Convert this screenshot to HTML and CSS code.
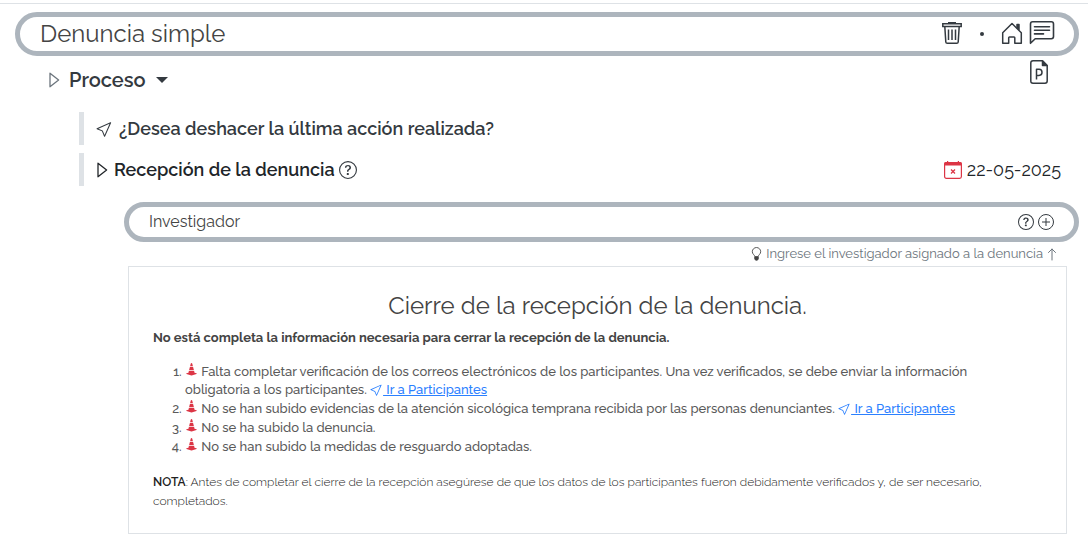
FILE: index.html
```html
<!DOCTYPE html>
<html lang="es">
<head>
<meta charset="utf-8">
<meta name="viewport" content="width=device-width, initial-scale=1">
<title>Denuncia simple</title>
<link rel="stylesheet" href="styles.css">
</head>
<body>
<svg class="defs" aria-hidden="true">
  <symbol id="cursor" viewBox="0 0 16 16"><path d="M14.082 2.182a.5.5 0 0 1 .103.557L8.528 15.467a.5.5 0 0 1-.917-.007L5.57 10.694.803 8.652a.5.5 0 0 1-.006-.916l12.728-5.657a.5.5 0 0 1 .556.103zM2.25 8.184l3.897 1.67a.5.5 0 0 1 .262.263l1.67 3.897L12.743 3.52z"/></symbol>
  <symbol id="cone" viewBox="0 0 16 16"><path d="m9.97 4.88.953 3.811C10.159 8.878 9.14 9 8 9s-2.158-.122-2.923-.309L6.03 4.88C6.635 4.957 7.3 5 8 5s1.365-.043 1.97-.12m-.245-.978L8.97.88C8.718-.13 7.282-.13 7.03.88L6.275 3.9C6.8 3.965 7.382 4 8 4s1.2-.036 1.725-.098m4.396 8.613a.5.5 0 0 1 .037.96l-6 2a.5.5 0 0 1-.316 0l-6-2a.5.5 0 0 1 .037-.96l2.391-.598.565-2.257c.862.212 1.964.339 3.165.339s2.303-.127 3.165-.339l.565 2.257z"/></symbol>
  <symbol id="question" viewBox="0 0 16 16"><path d="M8 15A7 7 0 1 1 8 1a7 7 0 0 1 0 14m0 1A8 8 0 1 0 8 0a8 8 0 0 0 0 16"/><path d="M5.255 5.786a.237.237 0 0 0 .241.247h.825c.138 0 .248-.113.266-.25.09-.656.54-1.134 1.342-1.134.686 0 1.314.343 1.314 1.168 0 .635-.374.927-.965 1.371-.673.489-1.206 1.06-1.168 1.987l.003.217a.25.25 0 0 0 .25.246h.811a.25.25 0 0 0 .25-.25v-.105c0-.718.273-.927 1.01-1.486.609-.463 1.244-.977 1.244-2.056 0-1.511-1.276-2.241-2.673-2.241-1.267 0-2.655.59-2.75 2.286m1.557 5.763c0 .533.425.927 1.01.927.609 0 1.028-.394 1.028-.927 0-.552-.42-.94-1.029-.94-.584 0-1.009.388-1.009.94"/></symbol>
  <symbol id="triangle" viewBox="0 0 12 16"><path d="M2 1.200v13.600L10.600 8z" fill="none" stroke="currentColor" stroke-width="1.300" stroke-linejoin="round"/></symbol>
</svg>

<div class="rule"></div>
<main class="page">
  <header class="pill pill-title">
    <h1 class="title">Denuncia simple</h1>
    <div class="tools">
      <button class="icon-btn" aria-label="Eliminar"><svg class="icon-lg" viewBox="0 0 24 24" fill="none" stroke="currentColor" stroke-width="1.5"><path d="M2.800 1.800h18.400v2.700H2.800zM4.800 4.500l1 15.500q.1 1.300 1.500 1.300h9.400q1.400 0 1.500-1.300L19.200 4.500M8.500 7.500v10.500M12 7.500v10.500M15.500 7.500v10.500"/><path d="M9 1V.500h6V1" stroke-width="2"/></svg></button>
      <span class="dot"></span>
      <a class="icon-btn" href="#inicio" aria-label="Inicio"><svg class="icon-lg" viewBox="0 0 24 24" fill="none" stroke="currentColor" stroke-width="1.5" stroke-linejoin="round"><path d="M2.700 10.800V21.300h6v-5.500q0-.8.8-.8h4.500q.8 0 .8.8v5.500h6.500V10.800L12 1.500z"/><path d="M17 2.500h2v5l-2-2z" fill="currentColor"/></svg></a>
      <button class="icon-btn" aria-label="Comentarios"><svg class="icon-xl" viewBox="0 1 26 24" fill="none" stroke="currentColor" stroke-width="1.600" stroke-linecap="round" stroke-linejoin="round"><path d="M1.500 22.300V3q0-2.200 2.200-2.200h18.600q2.200 0 2.200 2.200v12.500q0 2.200-2.200 2.200H6.200z"/><path d="M5.500 5.700h15M5.500 9.300h15M5.500 12.900h9"/></svg></button>
    </div>
  </header>

  <div class="process">
    <button class="process-toggle"><svg class="tri thin"><use href="#triangle"/></svg><span>Proceso</span><span class="caret"></span></button>
    <button class="icon-btn doc" aria-label="Documento P"><svg class="icon-doc" viewBox="0 0 18 24" fill="none" stroke="currentColor" stroke-width="1.500" stroke-linejoin="round"><path d="M3 .8h9.500L17.200 5.500v15.500q0 2.200-2.200 2.200H3Q.8 23.200.8 21V3Q.8.8 3 .8z"/><path d="M12.500 1v4.500h4.500z" fill="currentColor"/><path d="M6.500 19.500V9.200h2.500q3 0 3 3.100t-3 3.100H6.500"/></svg></button>
  </div>

  <section class="steps">
    <div class="step">
      <a class="step-name undo" href="#deshacer"><svg class="icon-md"><use href="#cursor"/></svg><span>¿Desea deshacer la última acción realizada?</span></a>
    </div>
    <div class="step">
      <button class="step-name"><svg class="tri"><use href="#triangle"/></svg><span>Recepción de la denuncia</span></button>
      <button class="icon-btn help" aria-label="Ayuda"><svg class="icon-help"><use href="#question"/></svg></button>
      <div class="date"><svg class="icon-cal" viewBox="0 0 18 18"><rect x=".6" y="1.600" width="16.800" height="15.800" rx="1.800" fill="none" stroke="currentColor" stroke-width="1.200"/><path d="M0 4.500V3q0-2 2-2h1V0h1.200v1h9.600V0H15v1h1q2 0 2 2v1.500z" fill="currentColor"/><path d="m7 8.500 4 4m0-4-4 4" stroke="currentColor" stroke-width="1.300"/></svg><time datetime="2025-05-22">22-05-2025</time></div>
    </div>
  </section>

  <section class="detail">
    <div class="pill pill-field">
      <h2 class="field-name">Investigador</h2>
      <div class="field-tools">
        <button class="icon-btn" aria-label="Ayuda"><svg class="icon-sm"><use href="#question"/></svg></button>
        <button class="icon-btn" aria-label="Agregar investigador"><svg class="icon-sm" viewBox="0 0 16 16" fill="none" stroke="currentColor"><circle cx="8" cy="8" r="7.500"/><path d="M8 4v8M4 8h8"/></svg></button>
      </div>
    </div>
    <p class="hint"><svg class="bulb" viewBox="0 0 12 16" fill="none" stroke="currentColor"><path d="M4 11c0-2-2.800-2.800-2.800-5.600a4.800 4.800 0 0 1 9.600 0C10.800 8.200 8 9 8 11z"/><path d="M4 11.500h4v2.200L7 15H5l-1-1.300z" fill="currentColor"/></svg><span>Ingrese el investigador asignado a la denuncia</span><svg class="arrow" viewBox="0 0 10 13" fill="none" stroke="currentColor" stroke-linecap="round" stroke-linejoin="round"><path d="M5 12V1M1.500 4.500 5 1l3.500 3.500"/></svg></p>

    <article class="card">
      <h2 class="card-title">Cierre de la recepción de la denuncia.</h2>
      <p class="summary">No está completa la información necesaria para cerrar la recepción de la denuncia.</p>
      <ol class="issues">
        <li><svg class="cone"><use href="#cone"/></svg> Falta completar verificación de los correos electrónicos de los participantes. Una vez verificados, se debe enviar la información obligatoria a los participantes. <a href="#participantes"><svg class="go"><use href="#cursor"/></svg> Ir a Participantes</a></li>
        <li><svg class="cone"><use href="#cone"/></svg> No se han subido evidencias de la atención sicológica temprana recibida por las personas denunciantes. <a href="#participantes"><svg class="go"><use href="#cursor"/></svg> Ir a Participantes</a></li>
        <li><svg class="cone"><use href="#cone"/></svg> No se ha subido la denuncia.</li>
        <li><svg class="cone"><use href="#cone"/></svg> No se han subido la medidas de resguardo adoptadas.</li>
      </ol>
      <p class="note"><strong>NOTA</strong>: Antes de completar el cierre de la recepción asegúrese de que los datos de los participantes fueron debidamente verificados y, de ser necesario, completados.</p>
    </article>
  </section>
</main>
</body>
</html>
```
FILE: styles.css
```css
* { box-sizing: border-box; }
body {
  margin: 0;
  background: #fff;
  color: #212529;
  font-family: Raleway, Lato, "Open Sans", sans-serif;
  font-size: 13px;
}
h1, h2, p { margin: 0; font-weight: 400; }
button {
  padding: 0;
  border: 0;
  background: none;
  color: inherit;
  font: inherit;
  cursor: pointer;
}
svg { fill: currentColor; flex: none; }
svg[fill="none"] { fill: none; }
.defs { position: absolute; width: 0; height: 0; }

.rule { height: 4px; border-bottom: 1px solid #dee2e6; }
.page { padding: 8px 9px 16px 15px; }

.pill {
  display: flex;
  align-items: center;
  justify-content: space-between;
  border: 5px solid #adb5bd;
  border-radius: 24px;
}
.pill-title { padding: 2px 19px 2px 20px; }
.title { font-size: 24px; line-height: 30px; color: #444; }
.tools { display: flex; align-items: center; color: #343a40; }
.icon-btn { display: flex; color: #343a40; }
.icon-lg { width: 24px; height: 24px; }
.icon-xl { width: 26px; height: 24px; overflow: visible; }
.icon-doc { width: 18px; height: 24px; }
.dot { width: 4px; height: 4px; margin: 0 16px; border-radius: 50%; background: #343a40; }
.tools a + button { margin-left: 5px; }

.process {
  display: flex;
  align-items: center;
  justify-content: space-between;
  height: 40px;
  margin-top: 4px;
  padding: 0 31px 0 33px;
}
.process-toggle {
  display: flex;
  align-items: center;
  font-size: 20px;
  font-weight: 600;
  line-height: 24px;
  color: #343a40;
}
.tri { width: 12px; height: 16px; margin-right: 6px; }
.tri.thin { margin-right: 9px; color: #6c757d; }
.caret {
  margin-left: 10px;
  border: 6px solid transparent;
  border-top-color: #343a40;
  border-bottom: 0;
}
.doc { align-self: flex-start; }

.steps {
  display: grid;
  gap: 8px;
  margin: 12px 0 16px 64px;
}
.step {
  display: flex;
  align-items: center;
  height: 33px;
  padding: 0 18px 0 12px;
  border-left: 5px solid #dee2e6;
}
.step-name {
  display: flex;
  align-items: center;
  font-size: 18px;
  font-weight: 600;
  line-height: 24px;
  color: #212529;
  text-decoration: none;
}
.undo { color: #343a40; }
.icon-md { width: 17px; height: 17px; margin-right: 6px; }
.help { margin-left: 4px; }
.icon-help { width: 18px; height: 18px; }
.date { display: flex; align-items: center; margin-left: auto; font-size: 18px; line-height: 24px; }
.icon-cal { width: 18px; height: 18px; margin-right: 5px; color: #dc3545; }

.detail { margin-left: 109px; }
.pill-field { padding: 3px 20px; }
.field-name { font-size: 16px; line-height: 24px; color: #444; }
.field-tools { display: flex; gap: 4px; }
.icon-sm { width: 16px; height: 16px; }
.hint {
  display: flex;
  align-items: center;
  justify-content: flex-end;
  padding-right: 22px;
  line-height: 24px;
  color: #6c757d;
}
.bulb { width: 11px; height: 14px; margin-right: 4px; color: #444; }
.arrow { width: 10px; height: 13px; margin-left: 4px; }

.card {
  margin: 0 12px 0 4px;
  padding: 24px 24px 22px;
  border: 1px solid #dee2e6;
  color: #444;
}
.card-title { margin-bottom: 8px; font-size: 24px; line-height: 30px; text-align: center; }
.summary { font-weight: 700; line-height: 18px; }
.issues {
  margin: 16px 0;
  padding: 0 16px 0 32px;
  font-weight: 500;
  line-height: 18px;
  color: #5a5a5a;
}
.issues li + li { margin-top: 1px; }
.issues a { color: #2b80ff; }
.cone { width: 13px; height: 13px; color: #dc3545; }
.go { width: 13px; height: 13px; vertical-align: -2px; }
.note { padding-top: 1px; font-size: 12px; font-weight: 300; line-height: 19px; color: #222; }
.note strong { font-weight: 600; }
```
